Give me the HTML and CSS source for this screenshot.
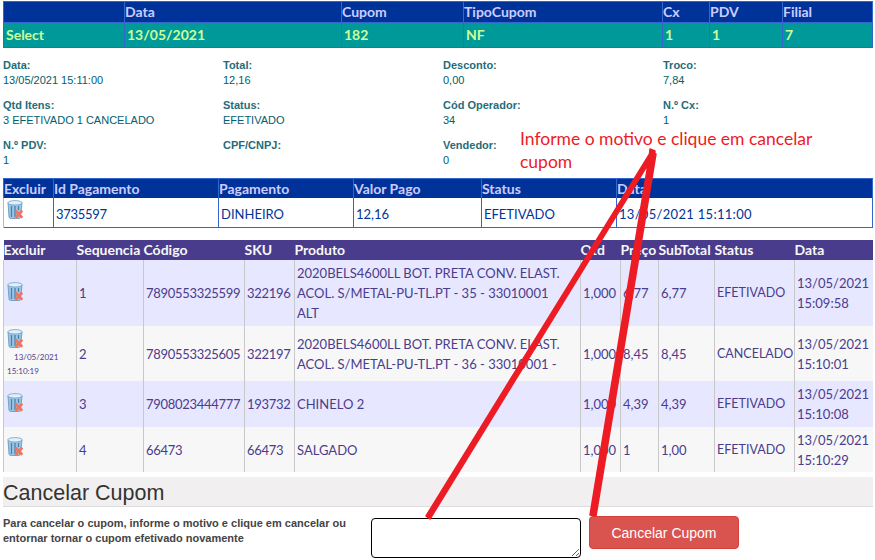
FILE: index.html
```html
<!DOCTYPE html>
<html lang="en">
<head>
  <meta charset="UTF-8">
  <meta name="viewport" content="width=device-width, initial-scale=1.0">
  <title>Cancelar Cupom</title>
  <link rel="stylesheet" href="styles.css">
</head>
<body>
  <svg class="icon-defs" width="0" height="0">
    <symbol id="trash" viewBox="0 0 16 19">
      <path d="M1 3 L2 17 Q2 18.5 4.5 18.5 H11 Q13.5 18.5 13.5 17 L15 3 Z" fill="#9cc6e6" stroke="#5b93bf" stroke-width="0.8"/>
      <ellipse cx="8" cy="2.8" rx="7.2" ry="2.2" fill="#e3eff8" stroke="#6fa3cb" stroke-width="0.8"/>
      <path d="M4.5 6 V17 M8 6 V17 M11.5 6 V10" stroke="#4a80ad" stroke-width="1.3"/>
      <path d="M8.4 10.6 L15.2 17.8 M15.2 10.6 L8.4 17.8" stroke="#ee7560" stroke-width="2.8"/>
    </symbol>
  </svg>

  <table class="grid grid-cupom">
    <colgroup>
      <col class="c1"><col class="c2"><col class="c3"><col class="c4"><col class="c5"><col class="c6"><col>
    </colgroup>
    <tr>
      <th></th><th>Data</th><th>Cupom</th><th>TipoCupom</th><th>Cx</th><th>PDV</th><th>Filial</th>
    </tr>
    <tr class="selected">
      <td>Select</td><td>13/05/2021</td><td>182</td><td>NF</td><td>1</td><td>1</td><td>7</td>
    </tr>
  </table>

  <div class="details">
    <div class="field"><b>Data:</b><span>13/05/2021 15:11:00</span></div>
    <div class="field"><b>Total:</b><span>12,16</span></div>
    <div class="field"><b>Desconto:</b><span>0,00</span></div>
    <div class="field"><b>Troco:</b><span>7,84</span></div>
    <div class="field"><b>Qtd Itens:</b><span>3 EFETIVADO 1 CANCELADO</span></div>
    <div class="field"><b>Status:</b><span>EFETIVADO</span></div>
    <div class="field"><b>Cód Operador:</b><span>34</span></div>
    <div class="field"><b>N.º Cx:</b><span>1</span></div>
    <div class="field"><b>N.º PDV:</b><span>1</span></div>
    <div class="field"><b>CPF/CNPJ:</b><span></span></div>
    <div class="field"><b>Vendedor:</b><span>0</span></div>
  </div>

  <table class="grid grid-pagamento">
    <colgroup>
      <col class="c1"><col class="c2"><col class="c3"><col class="c4"><col class="c5"><col>
    </colgroup>
    <tr>
      <th>Excluir</th><th>Id Pagamento</th><th>Pagamento</th><th>Valor Pago</th><th>Status</th><th>Data</th>
    </tr>
    <tr>
      <td class="icon-cell"><svg class="trash"><use href="#trash"/></svg></td>
      <td class="num">3735597</td><td>DINHEIRO</td><td>12,16</td><td>EFETIVADO</td><td class="data">13/05/2021 15:11:00</td>
    </tr>
  </table>

  <table class="grid grid-itens">
    <colgroup>
      <col class="c1"><col class="c2"><col class="c3"><col class="c4"><col class="c5"><col class="c6"><col class="c7"><col class="c8"><col class="c9"><col>
    </colgroup>
    <tr>
      <th>Excluir</th><th>Sequencia</th><th>Código</th><th>SKU</th><th>Produto</th><th>Qtd</th><th>Preço</th><th>SubTotal</th><th>Status</th><th>Data</th>
    </tr>
    <tr class="row-1">
      <td class="icon-cell"><svg class="trash"><use href="#trash"/></svg></td>
      <td>1</td><td class="num">7890553325599</td><td class="num">322196</td>
      <td class="produto">2020BELS4600LL BOT. PRETA CONV. ELAST. ACOL. S/METAL-PU-TL.PT - 35 - 33010001 ALT</td>
      <td>1,000</td><td>6,77</td><td>6,77</td><td class="status">EFETIVADO</td><td>13/05/2021 15:09:58</td>
    </tr>
    <tr class="row-2">
      <td class="icon-cell">
        <svg class="trash"><use href="#trash"/></svg>
        <div class="cancel-date"><span>13/05/2021</span> 15:10:19</div>
      </td>
      <td>2</td><td class="num">7890553325605</td><td class="num">322197</td>
      <td class="produto">2020BELS4600LL BOT. PRETA CONV. ELAST. ACOL. S/METAL-PU-TL.PT - 36 - 33010001 -</td>
      <td>1,000</td><td>8,45</td><td>8,45</td><td class="status">CANCELADO</td><td>13/05/2021 15:10:01</td>
    </tr>
    <tr class="row-3">
      <td class="icon-cell"><svg class="trash"><use href="#trash"/></svg></td>
      <td>3</td><td class="num">7908023444777</td><td class="num">193732</td><td class="produto">CHINELO 2</td>
      <td>1,000</td><td>4,39</td><td>4,39</td><td class="status">EFETIVADO</td><td>13/05/2021 15:10:08</td>
    </tr>
    <tr class="row-4">
      <td class="icon-cell"><svg class="trash"><use href="#trash"/></svg></td>
      <td>4</td><td class="num">66473</td><td class="num">66473</td><td class="produto">SALGADO</td>
      <td>1,000</td><td>1</td><td>1,00</td><td class="status">EFETIVADO</td><td>13/05/2021 15:10:29</td>
    </tr>
  </table>

  <h2 class="section-title">Cancelar Cupom</h2>
  <div class="cancel-form">
    <p>Para cancelar o cupom, informe o motivo e clique em cancelar ou entornar tornar o cupom efetivado novamente</p>
    <textarea class="motivo"></textarea>
    <button class="btn-cancelar">Cancelar Cupom</button>
  </div>

  <!-- anotacao desenhada por cima do print -->
  <div class="note">Informe o motivo e clique em cancelar cupom</div>
  <svg class="arrows" width="875" height="560" viewBox="0 0 875 560">
    <path d="M652 150 L655 153 L430 519 L426 516 Z M650 152 L656 154 L596 516 L590 515 Z M648 167 L650 149 L655 151 L653 168 Z" fill="#ed1c24" stroke="#ed1c24" stroke-width="1.5" stroke-linejoin="round"/>
  </svg>
</body>
</html>
```

FILE: styles.css
```css
body {
  margin: 0;
  padding: 0 2px 0 3px;
  font-family: "Liberation Sans", Arial, sans-serif;
  background-color: #fff;
  position: relative;
  height: 560px;
  box-sizing: border-box;
  overflow: hidden;
}

.icon-defs {
  position: absolute;
}

.grid {
  width: 870px;
  table-layout: fixed;
  border-collapse: collapse;
  font-family: Lato, "Open Sans", sans-serif;
}

.grid th {
  text-align: left;
  font-weight: bold;
  padding: 0;
  white-space: nowrap;
  overflow: visible;
}

.grid td {
  padding: 0 2px;
}

.grid td.num {
  letter-spacing: -0.3px;
}

/* cupom */
.grid-cupom {
  margin-top: 1px;
  border: 1px solid #3366cc;
}

.grid-cupom .c1 { width: 121px; }
.grid-cupom .c2 { width: 217px; }
.grid-cupom .c3 { width: 122px; }
.grid-cupom .c4 { width: 199px; }
.grid-cupom .c5 { width: 47px; }
.grid-cupom .c6 { width: 73px; }

.grid-cupom th {
  height: 19px;
  padding-bottom: 1px;
  background-color: #003399;
  color: #ccccff;
  font-size: 14px;
  border-left: 1px solid #3366cc;
  border-bottom: 1px solid #3366cc;
}

.grid-cupom td {
  height: 23px;
  padding-bottom: 1px;
  background-color: #009999;
  color: #ccff99;
  font-size: 14px;
  font-weight: bold;
  border-left: 1px solid #3366cc;
}

/* dados do cupom */
.details {
  display: grid;
  grid-template-columns: 220px 220px 220px 210px;
  grid-auto-rows: 40px;
  padding-top: 11px;
  box-sizing: border-box;
  height: 130px;
  font-size: 11px;
  color: #006070;
}

.field {
  display: flex;
  flex-direction: column;
  gap: 2px;
  line-height: 13px;
}

.field b {
  font-weight: bold;
  color: #1f6d7a;
}

/* pagamento */
.grid-pagamento {
  border: 1px solid #3366cc;
}

.grid-pagamento .c1 { width: 50px; }
.grid-pagamento .c2 { width: 165px; }
.grid-pagamento .c3 { width: 135px; }
.grid-pagamento .c4 { width: 128px; }
.grid-pagamento .c5 { width: 135px; }

.grid-pagamento th {
  height: 19px;
  background-color: #003399;
  color: #ccccff;
  font-size: 14px;
  border-left: 1px solid #3366cc;
}

.grid-pagamento td {
  height: 27px;
  padding-top: 2px;
  color: #003399;
  font-size: 13px;
  border-left: 1px solid #3366cc;
}

.grid-pagamento td.data {
  letter-spacing: 0.3px;
}

.grid-pagamento td.icon-cell {
  border-left: 1px solid #bbb;
}

.icon-cell {
  vertical-align: top;
}

.grid td.icon-cell {
  padding: 2px 0 0 3px;
}

.trash {
  display: block;
  width: 16px;
  height: 19px;
}

/* itens */
.grid-itens {
  margin-top: 12px;
}

.grid-itens .c1 { width: 73px; }
.grid-itens .c2 { width: 67px; }
.grid-itens .c3 { width: 101px; }
.grid-itens .c4 { width: 50px; }
.grid-itens .c5 { width: 286px; }
.grid-itens .c6 { width: 40px; }
.grid-itens .c7 { width: 38px; }
.grid-itens .c8 { width: 56px; }
.grid-itens .c9 { width: 80px; }

.grid-itens th {
  height: 19px;
  padding-bottom: 1px;
  background-color: #4a3c8c;
  color: #f7f7f7;
  font-size: 14px;
}

.grid-itens td {
  color: #4a3c8c;
  font-size: 13px;
  line-height: 20px;
  border-left: 1px solid #c8c8c8;
}

.grid-itens td.produto {
  padding-right: 8px;
}

.grid-itens td.status {
  font-size: 12.5px;
  white-space: nowrap;
}

.grid-itens tr:nth-child(even) td {
  background-color: #e7e7ff;
}

.grid-itens tr:nth-child(odd) td {
  background-color: #f7f7f7;
}

.row-1 td { height: 66px; }
.row-2 td { height: 55px; }
.row-3 td { height: 46px; }
.row-4 td { height: 45px; }

.grid-itens td.icon-cell { padding-top: 0; }

.row-1 .trash { margin-top: 22px; }
.row-2 .trash { margin-top: 3px; }
.row-3 .trash { margin-top: 12px; }
.row-4 .trash { margin-top: 10px; }

.cancel-date {
  font-size: 8px;
  line-height: 14px;
  color: #4a3c8c;
  margin-top: 2px;
}

.cancel-date span {
  margin-left: 7px;
}

/* cancelar */
.section-title {
  margin: 5px 0 0;
  padding-top: 2px;
  height: 30px;
  box-sizing: border-box;
  line-height: 29px;
  background-color: #f1eff0;
  border-bottom: 1px solid #ddd;
  font-size: 21.5px;
  font-weight: normal;
  color: #333;
}

.cancel-form {
  display: flex;
  align-items: flex-start;
  margin-top: 9px;
}

.cancel-form p {
  width: 368px;
  box-sizing: border-box;
  margin: 0;
  padding-right: 10px;
  font-size: 11px;
  font-weight: bold;
  line-height: 15px;
  color: #444;
}

.motivo {
  width: 210px;
  height: 40px;
  box-sizing: border-box;
  margin: 2px 0 0;
  border: 1px solid #000;
  border-radius: 4px;
  background: #fff;
}

.btn-cancelar {
  width: 150px;
  height: 33px;
  margin-left: 8px;
  border: 1px solid #d43f3a;
  border-radius: 4px;
  background-color: #d9534f;
  color: #fff;
  font-family: "Liberation Sans", Arial, sans-serif;
  font-size: 14px;
}

/* anotacao */
.note {
  position: absolute;
  left: 520px;
  top: 127px;
  width: 310px;
  font-family: Lato, sans-serif;
  font-size: 17.5px;
  line-height: 23px;
  color: #ed1c24;
}

.arrows {
  position: absolute;
  left: 0;
  top: 0;
}
```
